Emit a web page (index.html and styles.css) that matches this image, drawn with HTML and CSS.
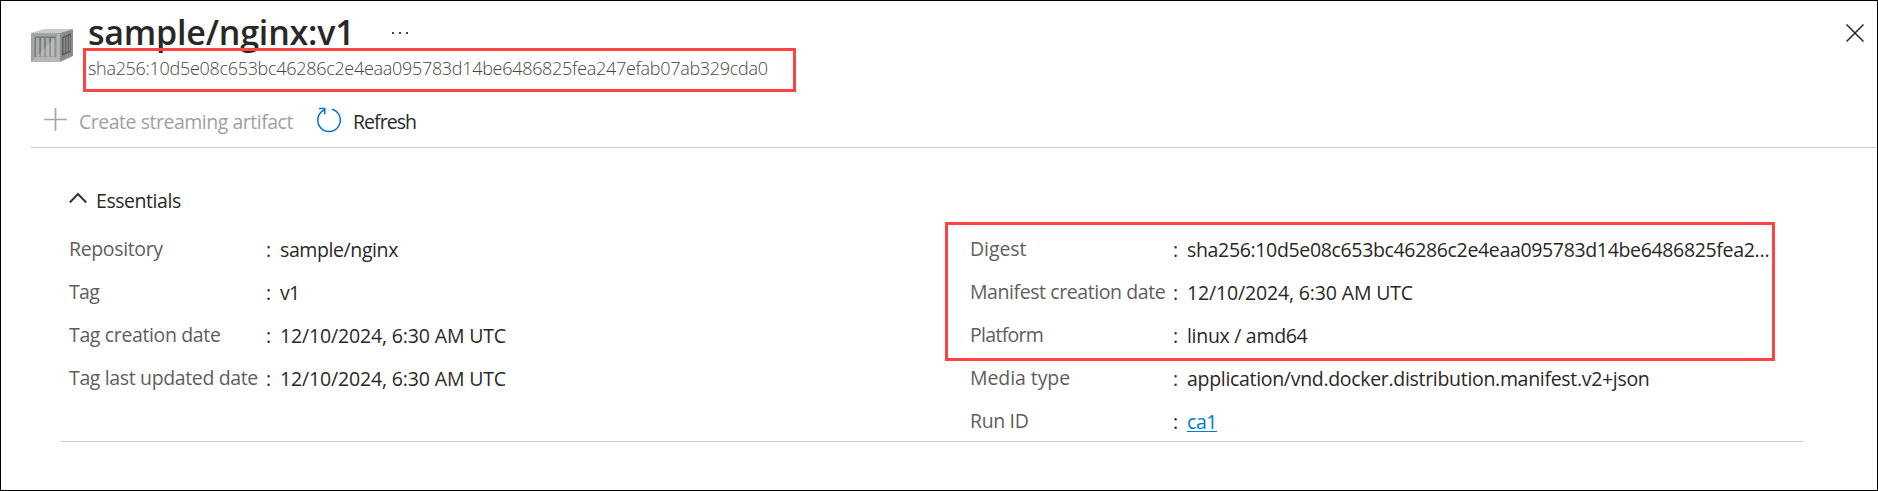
FILE: index.html
```
<!DOCTYPE html>
<html lang="en">
<head>
<meta charset="utf-8">
<title>sample/nginx:v1</title>
<link rel="stylesheet" href="styles.css">
</head>
<body>
<main class="blade">
  <header class="header">
    <svg class="crate" width="42" height="33" viewBox="0 0 42 33" aria-hidden="true">
      <path d="M0 4 13 0H42L29 4Z" fill="#c9cbcc"/>
      <path d="M0 4H29V33H0Z" fill="#a1a5a5"/>
      <path d="M29 4 42 0V27L29 33Z" fill="#8b8e8e"/>
      <path d="M3.500 7.500H25.500V28H3.500Z" fill="#777a7a"/>
      <path d="M5 9h3.200v18.500h-3.200zM10 9h3.200v18.500h-3.200zM15 9h3.200v18.500h-3.200zM20 9h3.200v18.500h-3.200z" fill="#a9acac"/>
      <path d="M31 8 40 4V23L31 27Z" fill="#5d6060"/>
      <path d="M32.500 9l1.500-.7v15.500l-1.500.7zM35.200 8l1.500-.7v15.500l-1.500.7zM37.900 7l1.300-.6v15.300l-1.300.6z" fill="#8b8e8e"/>
      <path d="M0 33 29 4V33Z" fill="#fff" opacity=".2"/>
    </svg>
    <div class="heading">
      <div class="title-row">
        <h1 class="title">sample/nginx:v1</h1>
        <svg class="more" width="18" height="4" viewBox="0 0 18 4" aria-label="More"><path d="M1 1h2v2H1zM8 1h2v2H8zM15 1h2v2h-2z" fill="#444"/></svg>
      </div>
      <p class="subtitle">sha256:10d5e08c653bc46286c2e4eaa095783d14be6486825fea247efab07ab329cda0</p>
      <div class="mark mark-subtitle"></div>
    </div>
    <svg class="close" width="18" height="18" viewBox="0 0 18 18" aria-label="Close"><path d="M.5.500l17 17M17.500.500l-17 17" stroke="#292827" stroke-width="1.500"/></svg>
  </header>

  <nav class="toolbar">
    <span class="command command-disabled">
      <svg width="23" height="23" viewBox="0 0 23 23"><path d="M11.500 0v23M0 11.500h23" stroke="#a6a6a6" stroke-width="1.700"/></svg>
      <span class="create">Create streaming artifact</span>
    </span>
    <span class="command">
      <svg width="26" height="26" viewBox="0 0 26 26" fill="none" stroke="#0078d4" stroke-width="1.500"><path d="M16 2.300A11.300 11.300 0 1 1 8.200 3M3 1.500h5.800v5.700"/></svg>
      <span class="refresh">Refresh</span>
    </span>
  </nav>

  <section class="essentials">
    <h2 class="essentials-title">
      <svg width="18" height="12" viewBox="0 0 18 12"><path d="M.8 10.500 9 2l8.200 8.500" fill="none" stroke="#333" stroke-width="2"/></svg>
      <span>Essentials</span>
    </h2>
    <div class="columns">
      <dl class="props">
        <dt>Repository</dt><dd class="name">sample/nginx</dd>
        <dt class="short">Tag</dt><dd class="version">v1</dd>
        <dt>Tag creation date</dt><dd>12/10/2024, 6:30 AM UTC</dd>
        <dt>Tag last updated date</dt><dd>12/10/2024, 6:30 AM UTC</dd>
      </dl>
      <dl class="props props-right">
        <dt class="loose">Digest</dt><dd class="digest">sha256:10d5e08c653bc46286c2e4eaa095783d14be6486825fea2…</dd>
        <dt class="manifest">Manifest creation date</dt><dd>12/10/2024, 6:30 AM UTC</dd>
        <dt class="short">Platform</dt><dd class="platform">linux / amd64</dd>
        <dt class="loose">Media type</dt><dd class="media">application/vnd.docker.distribution.manifest.v2+json</dd>
        <dt>Run ID</dt><dd><a class="link" href="#">ca1</a></dd>
        <div class="mark mark-props"></div>
      </dl>
    </div>
  </section>
</main>
</body>
</html>
```

FILE: styles.css
```
* { box-sizing: border-box; }
body { margin: 0; background: #fff; }
h1, h2, p, dl, dd { margin: 0; font-weight: 400; }
svg { display: block; flex: none; }

.blade {
  width: 1878px;
  height: 491px;
  border: 1px solid #000;
  padding-left: 30px;
  overflow: hidden;
  font: 19.500px/43px "Open Sans", "Noto Sans", sans-serif;
  color: #292827;
  white-space: nowrap;
}

.header { display: flex; align-items: flex-start; height: 98px; }
.crate { margin-top: 28px; }
.heading { position: relative; margin-left: 15px; }
.title-row { display: flex; height: 54px; }
.title {
  width: 263px;
  font-size: 34px;
  line-height: 62px;
  font-weight: 600;
  letter-spacing: -.2px;
}
.more { margin: 30px 0 0 40px; }
.subtitle {
  font-size: 18px;
  line-height: 26px;
  font-weight: 300;
  letter-spacing: -.3px;
  color: #484644;
}
.close { margin: 23px 13px 0 auto; }

.mark { position: absolute; border: 3px solid #ff4343; }
.mark-subtitle { left: -5px; top: 47px; width: 713px; height: 44px; }
.mark-props { left: -25px; top: -5px; width: 830px; height: 139px; }

.toolbar {
  display: flex;
  gap: 22px;
  height: 49px;
  padding-left: 13px;
  border-bottom: 1px solid #d2d0ce;
}
.command { display: flex; align-items: center; gap: 11px; height: 45px; }
.command svg { margin-bottom: 4px; }
.command-disabled { gap: 12px; color: #a19f9d; }
.create { width: 215px; letter-spacing: -.48px; }
.refresh { letter-spacing: -.95px; }

.essentials { width: 1742px; height: 294px; margin-left: 30px; padding: 28px 0 0 8px; border-bottom: 1px solid #d2d0ce; }
.essentials-title {
  display: flex;
  align-items: center;
  gap: 9px;
  height: 48px;
  margin-bottom: 3px;
  font-size: 19.500px;
  line-height: 43px;
  font-weight: 500;
  letter-spacing: -.45px;
}
.essentials-title svg { margin-bottom: 4px; }

.columns { display: grid; grid-template-columns: 901px 1fr; }
.props { position: relative; display: grid; grid-template-columns: 197px 1fr; grid-auto-rows: 43px; align-content: start; }
.props-right { grid-template-columns: 203px 1fr; }
.props dt { color: #605e5c; letter-spacing: -.36px; }
.props dt.short { letter-spacing: -.7px; }
.props dt.loose { letter-spacing: -.08px; }
.props dt.manifest { letter-spacing: -.42px; }
.props dd { padding-top: 1px; letter-spacing: -.15px; }
.props dd::before { content: ":"; display: inline-block; width: 14px; }
.props dd.name { letter-spacing: -.4px; }
.props dd.version { letter-spacing: -.8px; }
.props dd.digest { letter-spacing: -.34px; }
.props dd.platform { letter-spacing: -.3px; }
.props dd.media { letter-spacing: -.31px; }
.link { color: #0078d4; letter-spacing: -.44px; text-underline-offset: 2px; }
```
